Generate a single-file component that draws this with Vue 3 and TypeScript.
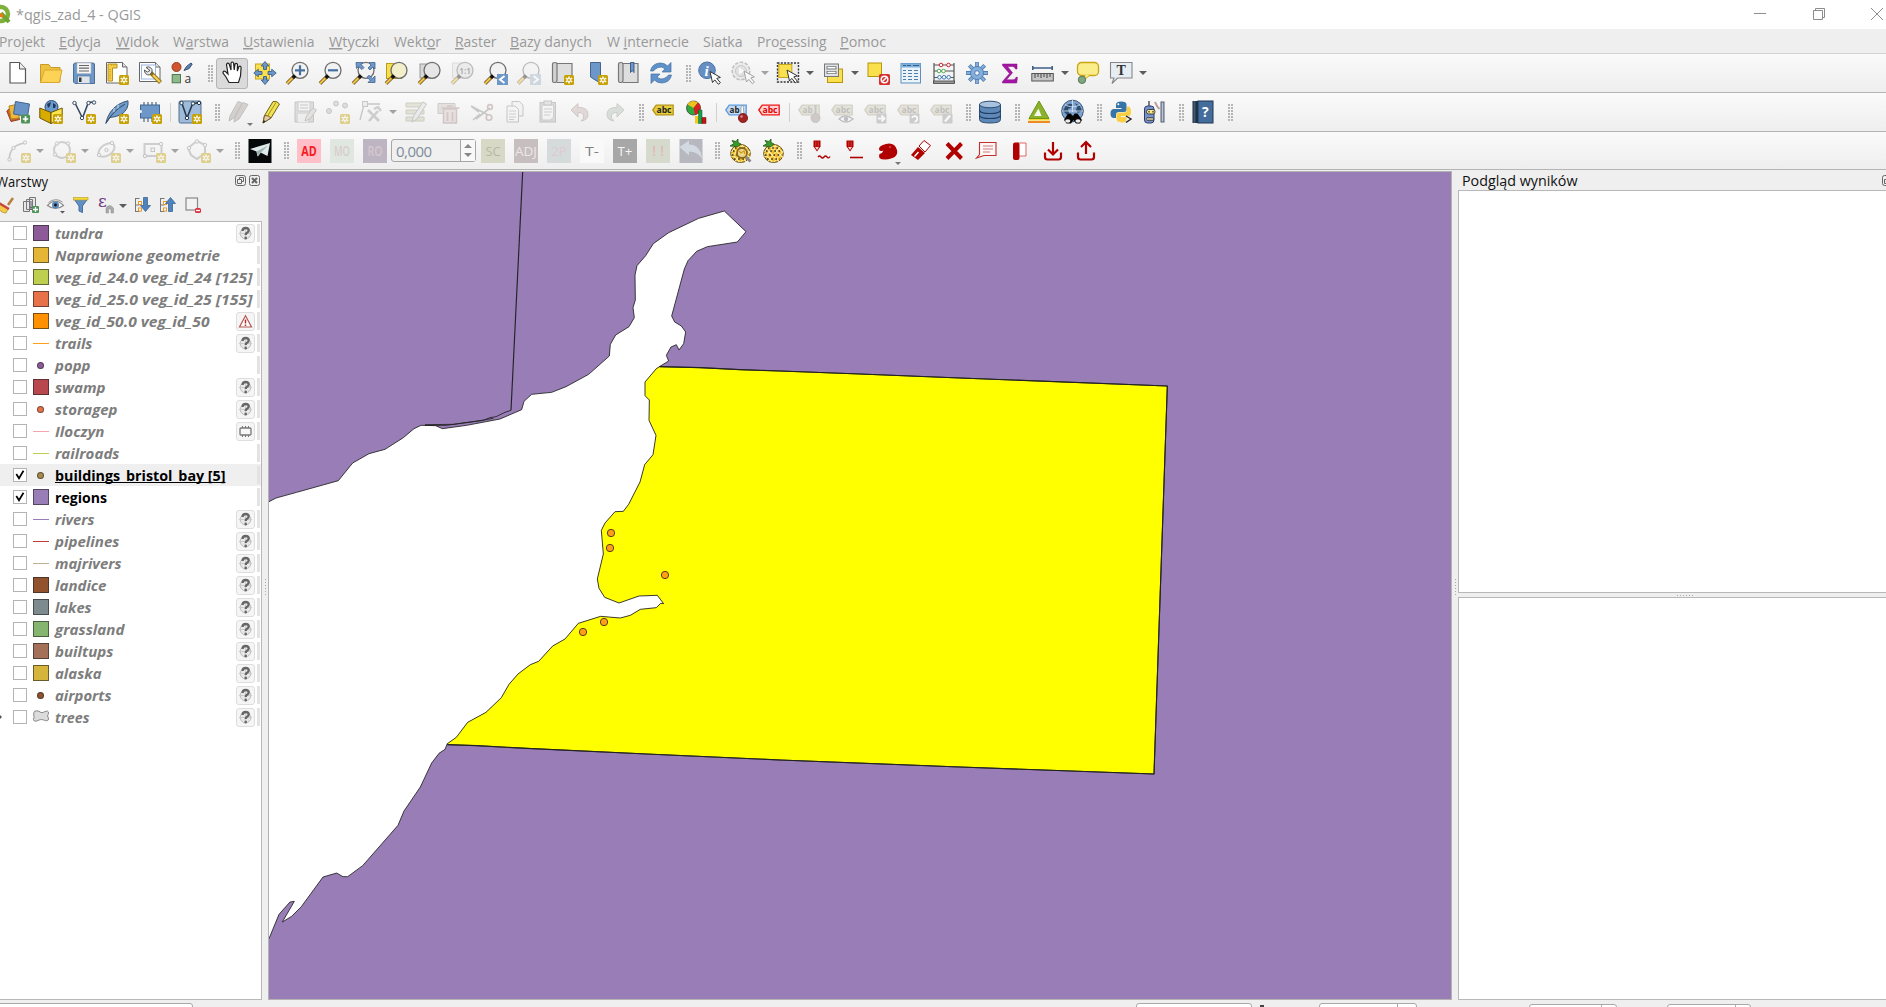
<script setup lang="ts">
type MenuEntry = { pre: string; key: string; post: string; w: number; cell: number }
type ToolItem = { kind: 'icon' | 'arrow' | 'grip' | 'sep' | 'spin'; icon?: string; off?: boolean; on?: boolean }
type Layer = {
  name: string
  w: number
  kind: 'fill' | 'line' | 'dot' | 'group'
  color: string
  mark?: 'crs' | 'warn' | 'mem'
  checked?: boolean
  selected?: boolean
}

// cell = distance from the start of this label to the start of the next one
const menus: MenuEntry[] = [
  { pre: '', key: '', post: 'Projekt', w: 46, cell: 60 },
  { pre: '', key: 'E', post: 'dycja', w: 42, cell: 57 },
  { pre: '', key: 'W', post: 'idok', w: 43, cell: 56.5 },
  { pre: 'W', key: 'a', post: 'rstwa', w: 56, cell: 70.5 },
  { pre: '', key: 'U', post: 'stawienia', w: 71.5, cell: 86 },
  { pre: '', key: 'W', post: 'tyczki', w: 50.5, cell: 65 },
  { pre: 'Wekt', key: 'o', post: 'r', w: 47, cell: 60.5 },
  { pre: '', key: 'R', post: 'aster', w: 41.5, cell: 55.5 },
  { pre: '', key: 'B', post: 'azy danych', w: 82, cell: 96.5 },
  { pre: 'W ', key: 'i', post: 'nternecie', w: 82, cell: 96.5 },
  { pre: 'Siatka', key: '', post: '', w: 39.5, cell: 54 },
  { pre: 'Pro', key: 'c', post: 'essing', w: 69.5, cell: 83 },
  { pre: '', key: 'P', post: 'omoc', w: 46, cell: 60 },
]

const layers: Layer[] = [
  { name: 'tundra', w: 48, kind: 'fill', color: '#8d5a99', mark: 'crs' },
  { name: 'Naprawione geometrie', w: 165, kind: 'fill', color: '#e5b636' },
  { name: 'veg_id_24.0 veg_id_24 [125]', w: 197.5, kind: 'fill', color: '#becf50' },
  { name: 'veg_id_25.0 veg_id_25 [155]', w: 197.5, kind: 'fill', color: '#e77148' },
  { name: 'veg_id_50.0 veg_id_50', w: 154.5, kind: 'fill', color: '#ff9000', mark: 'warn' },
  { name: 'trails', w: 37.5, kind: 'line', color: '#ff9e17', mark: 'crs' },
  { name: 'popp', w: 35.5, kind: 'dot', color: '#8d5a99' },
  { name: 'swamp', w: 50.5, kind: 'fill', color: '#b9484e', mark: 'crs' },
  { name: 'storagep', w: 62.5, kind: 'dot', color: '#e77148', mark: 'crs' },
  { name: 'Iloczyn', w: 49.5, kind: 'line', color: '#f3a6b2', mark: 'mem' },
  { name: 'railroads', w: 64.5, kind: 'line', color: '#becf50' },
  { name: 'buildings_bristol_bay [5]', w: 170.5, kind: 'dot', color: '#a5884c', checked: true, selected: true },
  { name: 'regions', w: 52, kind: 'fill', color: '#987db7', checked: true },
  { name: 'rivers', w: 39.5, kind: 'line', color: '#987db7', mark: 'crs' },
  { name: 'pipelines', w: 64.5, kind: 'line', color: '#c43c39', mark: 'crs' },
  { name: 'majrivers', w: 66.5, kind: 'line', color: '#beb297', mark: 'crs' },
  { name: 'landice', w: 51.5, kind: 'fill', color: '#91522d', mark: 'crs' },
  { name: 'lakes', w: 36.5, kind: 'fill', color: '#7d8b8f', mark: 'crs' },
  { name: 'grassland', w: 69.5, kind: 'fill', color: '#85b66f', mark: 'crs' },
  { name: 'builtups', w: 58.5, kind: 'fill', color: '#a47158', mark: 'crs' },
  { name: 'alaska', w: 46.5, kind: 'fill', color: '#d5b43c', mark: 'crs' },
  { name: 'airports', w: 56.5, kind: 'dot', color: '#91522d', mark: 'crs' },
  { name: 'trees', w: 34.5, kind: 'group', color: '#d8d8d8', mark: 'crs' },
]

const star =
  '<rect x="14" y="14" width="10" height="10" rx="1.500" fill="#c6a206"/><path d="M19 15.400v7.200M15.800 17.200l6.400 3.600M22.200 17.200l-6.400 3.600" stroke="#fff" stroke-width="1.500"/><circle cx="19" cy="19" r="1" fill="#c6a206"/>'
const cursor = (x: number, y: number) =>
  `<path transform="translate(${x} ${y})" d="M0 0l2.500 11 2.300-2.600 3.600 4.400 2-1.600-3.600-4.300 3.600-1z" fill="#fff" stroke="#333" stroke-width="1"/>`
const lens = (inner: string, fill = '#f2f2f2') =>
  `<path d="M8 15.500L1 22.500" stroke="#4a3a10" stroke-width="3.600"/><path d="M6.400 17.100L1 22.500" stroke="#f5c344" stroke-width="2.200"/><circle cx="14" cy="9.300" r="8" fill="${fill}" stroke="#6e6e6e" stroke-width="1.300"/><path d="M7.200 16.400l2-2" stroke="#111" stroke-width="3.600"/>${inner}`
const tag = (fill: string, stroke: string, ink: string, extra = '', txt = 'abc') =>
  `<path d="M1.800 10L5.200 5.200h17v9.600h-17z" fill="${fill}" stroke="${stroke}" stroke-width="1.300"/><text x="5.500" y="13.200" font-size="9.500" font-weight="700" textLength="${txt.length > 2 ? 15 : 10}" lengthAdjust="spacingAndGlyphs" fill="${ink}">${txt}</text>${extra}`
const offTag = (extra: string, txt = 'abc') => tag('#cfcbb0', '#a5a28c', '#777', extra, txt)
const square = (bg: string, ink: string, txt: string, w: number, weight = 400) =>
  `<rect width="24" height="24" fill="${bg}"/><text x="${12 - w / 2}" y="17" font-size="13.500" font-weight="${weight}" textLength="${w}" lengthAdjust="spacingAndGlyphs" fill="${ink}">${txt}</text>`
const globe =
  '<circle cx="12.500" cy="11" r="10.800" fill="#7fa3cf" stroke="#3d5878"/><path d="M5 7c3-4 6-4 8-2l-2 3-3 1 1 4-2 2-4-4zM15 3l5 3 2 5-4 2-2-3 1-3z" fill="#2f4d70"/><path d="M5 4.500c4 3 11 3 15 0M2 11h21M12.500 0v12" stroke="#dce8f5" fill="none" stroke-width=".8"/>'
const pineapple =
  '<ellipse cx="12.500" cy="14.500" rx="9.800" ry="9" fill="#f0b92c" stroke="#5f4a14"/><path d="M5 9.500l13 13M9 6.500l13 12M3.500 14.500l8 8.500M14 6.500l8 7M19 8L7 22M14.500 6.500L3.500 18M22 12.500l-9 10.500M9.500 6.500L3.500 13" stroke="#fff09a" stroke-width="1.100"/><path d="M5 12h15M4 16h17M6 20h13M7 9h11" stroke="#33301c" stroke-width="1.500" stroke-dasharray="1.600 2.600"/><path d="M10 7.500L2 7l4-2.500L4 1.500l4 1L10 0v3.500L13 5z" fill="#3c9a2c" stroke="#1d5b12" stroke-width=".8"/>'
const redPen =
  '<path d="M3.500 1.500h7v6L7 12.500l-3.500-5z" fill="#b00000"/><path d="M5 8h4L7 11z" fill="#f5d0d0"/><path d="M5.800 2.500v5M8.200 2.500v5" stroke="#e06060" stroke-width=".7"/>'
const book =
  '<path d="M5 2.500h17v19H7" fill="#dedede" stroke="#777" stroke-width="1.200"/><path d="M2.500 3.500q0-2 2.300-2 2.200 0 2.200 2V19q0 2.500-2 2.500H4Q2.500 21.500 2.500 19.500z" fill="#d0d0d0" stroke="#777" stroke-width="1.200"/>'

const icons: Record<string, string> = {
  blank: '<path d="M4 1.500h9.500L19.500 8v14H4z" fill="#fff" stroke="#555" stroke-width="1.200"/><path d="M13.500 1.500V8h6" fill="#eee" stroke="#555"/>',
  open: '<path d="M1.500 21.500v-18h8.300l2 3H21V21z" fill="#eec13e" stroke="#c69b2c"/><path d="M5.500 9H23l-2.800 12.500H1.500z" fill="#fcd354" stroke="#d7a932"/>',
  save: '<path d="M3 2h18.500L22.500 3v19.500H3L1.500 21V3z" fill="#6c97c8" stroke="#4c6e96"/><rect x="5" y="2" width="14" height="10.500" fill="#f5f5f5" stroke="#bbb" stroke-width=".6"/><path d="M7 4.500h10M7 7.200h10M7 10h10" stroke="#666" stroke-width="1.200"/><rect x="5.500" y="15" width="12.500" height="7.500" fill="#dfe4ea" stroke="#4c6e96" stroke-width=".6"/><rect x="7" y="16.500" width="2.500" height="4.500" fill="#333"/>',
  layout: '<path d="M1.500 1.500h16L22 6v16H1.500z" fill="#fff" stroke="#666"/><path d="M17.500 1.500V6H22" fill="#ddd" stroke="#666"/><path d="M3 3h9v4H7.500v13H3z" fill="#f7cf4a" stroke="#b8901c"/><path d="M5 8v11M6 4h5" stroke="#b8901c" stroke-width="1.200" stroke-dasharray="1 1.200"/>' + star,
  manager: '<path d="M1.500 1.500h16L22 6v14.500H1.500z" fill="#fff" stroke="#666"/><path d="M17.500 1.500V6H22" fill="#ddd" stroke="#666"/><rect x="3.500" y="4" width="14" height="14" fill="none" stroke="#9cb4e0"/><path d="M13 12l9.500 9.500" stroke="#8a6f1b" stroke-width="4"/><path d="M15 14l7 7" stroke="#f5cf52" stroke-width="2.400"/><path d="M8 6.500a4 4 0 0 1 6 4.500l-2.500 3A4.500 4.500 0 0 1 6.500 9l2.800 2L12 9.500z" fill="#e8e8e8" stroke="#555" stroke-width="1"/>',
  style: '<circle cx="5.500" cy="6" r="4.500" fill="#d0562f" stroke="#9a3a1c"/><path d="M13 9.500l2.500-4L20 2l1.200 1-3 4.500z" fill="#5d84b4" stroke="#34506f"/><rect x="1.200" y="13.500" width="8.300" height="8.300" fill="#8fb88c" stroke="#4e7a4c"/><text x="13.500" y="21.500" font-size="12" fill="#333">a</text>',
  hand: '<path transform="translate(2.500 0)" d="M7.500 21.500L4.500 16 1.500 12q0-2.500 2.500-1.500l2.500 2.500L5 3.500q1-2.500 2.700-.5L9.500 9V2q1.200-2 2.600 0l.6 7 .8-6q1.500-1.500 2.500.3L15.800 10l1.600-4.500q2-1 2.200 1L19 15l-2 6.500z" fill="#fff" stroke="#222" stroke-width="1.200"/>',
  pan: '<rect x="2.500" y="3" width="14" height="15" fill="#fbe04e" stroke="#c7a51c"/><path d="M12 .5l3.800 4.500h-2.300v3.500h-3V5H8.200zM12 23.500L8.200 19h2.300v-3.500h3V19h2.300zM.8 12L5.300 8.200v2.300H9v3H5.300v2.300zM23.200 12l-4.500-3.800v2.300H15v3h3.700v2.300z" fill="#6c97c8" stroke="#3d5f87" stroke-width=".9"/>',
  zoomin: lens('<path d="M14 4.300v10M9 9.300h10" stroke="#46719f" stroke-width="2.200"/>'),
  zoomout: lens('<path d="M9 9.300h10" stroke="#46719f" stroke-width="2.200"/>'),
  zoomfull: lens('<path d="M4 1.500h7L9 3.500l3 3-2 2-3.500-3-2 2zM23 1.500v6.500l-2-2-3 3-2-2 3-3-2-2.500zM23 21.500h-7l2.200-2.300-3.200-3 2-2 3.300 3.300L23 15z" fill="#6c97c8" stroke="#42638b" stroke-width=".8"/>'),
  zoomsel: '<rect x="1.500" y="2.500" width="15" height="15" fill="#f6dd4c" stroke="#bb9d1c"/>' + lens('', '#f2efcb'),
  zoomlayer: '<rect x="2" y="3" width="14" height="14" fill="#d8d8d8" stroke="#999"/>' + lens('', '#e6e6e6'),
  zoomnative: '<rect x="1.500" y="2" width="15" height="15" fill="#e4e4e4" stroke="#bbb"/>' + lens('<text x="8.300" y="13" font-size="9.500" font-weight="700" textLength="11.500" lengthAdjust="spacingAndGlyphs" fill="#555">1:1</text>', '#ddd'),
  zoomlast: lens('<rect x="13" y="13" width="11" height="11" fill="#6c97c8"/><path d="M20.500 15L16 18.500l4.500 3.500" fill="none" stroke="#fff" stroke-width="2"/>'),
  zoomnext: lens('<rect x="13" y="13" width="11" height="11" fill="#9fb2c8"/><path d="M16.500 15l4.500 3.500-4.500 3.500" fill="none" stroke="#fff" stroke-width="2"/>'),
  newmap: book + star,
  bookmark: '<path d="M7.500 1.500h10V22l-4.500-2.500-5.500-3.500z" fill="#6c97c8" stroke="#44658e"/><g transform="translate(1 0)">' + star + '</g>',
  bookmarks: book + '<path d="M14.500 1.500h3.500v10l-1.800-2-1.700 2z" fill="#6c97c8" stroke="#34557e" stroke-width=".9"/>',
  refresh: '<path d="M1.500 10Q3 2.500 11 2q5 0 7.500 3L22 1.500V11h-9l3-3.200Q13 5 9 6.500 5.500 8 4.500 10z" fill="#5f92cb" stroke="#44709f" stroke-width=".7"/><path d="M22.500 14Q21 21.500 13 22q-5 0-7.500-3L2 22.500V13h9l-3 3.200q3 2.800 7 1.300 3.500-1.500 4.500-3.500z" fill="#5f92cb" stroke="#44709f" stroke-width=".7"/>',
  identify: '<circle cx="9" cy="9.300" r="8.300" fill="#6690c3" stroke="#4b73a4"/><text x="6.500" y="14.500" font-size="15" font-weight="700" font-style="italic" font-family="Liberation Serif" fill="#fff">i</text>' + cursor(12, 10.5),
  action: '<circle cx="10" cy="10" r="8.800" fill="#ddd" stroke="#777" stroke-width="1.500" stroke-dasharray="3.500 1.500"/><circle cx="10" cy="10" r="5.500" fill="#c8c8c8" stroke="#888"/><path d="M8 6.500l5.500 3.500L8 13.500z" fill="#fff"/>' + cursor(13, 10),
  select: '<rect x="1.500" y="2" width="21" height="19" fill="#eee" stroke="#333" stroke-width="1.400" stroke-dasharray="2 1.300"/><rect x="2.800" y="3.500" width="13" height="13" fill="#fbe04e" stroke="#c7a51c"/>' + cursor(11, 9),
  form: '<rect x="6.500" y="8" width="15" height="13.500" fill="#fbe04e" stroke="#b8960c"/><rect x="3.500" y="3" width="14" height="12.500" fill="#dfe3e6" stroke="#777"/><path d="M5.500 6.800h10M5.500 11.500h10" stroke="#777" stroke-width="3.200"/><path d="M6.500 6.800h8M6.500 11.500h8" stroke="#fff" stroke-width="1.600"/>',
  deselect: '<rect x="2" y="2" width="13.500" height="13.500" fill="#fbe04e" stroke="#b8960c"/><rect x="13" y="13" width="11" height="11" rx="1.500" fill="#d73030"/><circle cx="18.500" cy="18.500" r="3.300" fill="none" stroke="#fff" stroke-width="1.500"/><path d="M16.500 20.500l4-4" stroke="#fff" stroke-width="1.500"/>',
  table: '<rect x="2" y="2.500" width="19.500" height="19.500" fill="#eaf3fa" stroke="#5b8fc0"/><rect x="2" y="2.500" width="19.500" height="4" fill="#7fb0dc"/><path d="M4 4.500h3M8 4.500h4M14 4.500h6" stroke="#2f6290" stroke-width="1"/><path d="M4 9.500h3M9 9.500h4M15 9.500h4M4 12.500h3M9 12.500h4M15 12.500h4M4 15.500h3M9 15.500h4M15 15.500h4M4 18.500h3M9 18.500h4M15 18.500h4" stroke="#4d7da8" stroke-width="1.200"/>',
  abacus: '<path d="M2 2v20M22 2v20M2 4h20M2 10h20M2 16.500h20" stroke="#555" stroke-width="1.200"/><rect x="1.500" y="20" width="21" height="2.500" fill="#999" stroke="#444" stroke-width=".8"/><g fill="#fff"><circle cx="9" cy="4" r="1.800" stroke="#d02030"/><circle cx="16.500" cy="4" r="1.800" stroke="#d02030"/><circle cx="7" cy="10" r="1.800" stroke="#4fae4f"/><circle cx="11.500" cy="10" r="1.800" stroke="#4fae4f"/><circle cx="7.500" cy="16.300" r="1.800" stroke="#3d7ab8"/><circle cx="12" cy="16.300" r="1.800" stroke="#3d7ab8"/><circle cx="16.700" cy="16.300" r="1.800" stroke="#3d7ab8"/></g>',
  gear: '<path d="M12 1v22M1 12h22M4.300 4.300l15.400 15.400M19.700 4.300L4.300 19.700" stroke="#4f7fb5" stroke-width="3.800"/><path d="M12 1.500v21M1.500 12h21M4.800 4.800l14.400 14.400M19.200 4.800L4.800 19.200" stroke="#86aedb" stroke-width="2.200"/><circle cx="12" cy="12" r="6.500" fill="#86aedb" stroke="#4f7fb5"/><circle cx="12" cy="12" r="2.300" fill="#f4f4f4" stroke="#4f7fb5"/>',
  sigma: '<path d="M4.500 3H19v5h-1.500q-.5-2.500-3-2.500H9.500l5 6.300-6 7h6.500q2.500 0 3-2.500H19.500l-.8 5.700H4.500v-1.500l7-8-7-8z" fill="#a516a5" stroke="#7d0e7d" stroke-width=".5"/>',
  ruler: '<path d="M1.500 7h20M1.800 5v4M21.200 5v4" stroke="#3f5f85" stroke-width="1.600"/><rect x=".8" y="12.500" width="21.500" height="7.500" fill="#c5c5c5" stroke="#555"/><path d="M4 13v4M7 13v3M10 13v4M13 13v3M16 13v4M19 13v3" stroke="#444"/>',
  tip: '<rect x="1.500" y="1.500" width="21" height="13" rx="4" fill="#fbed8a" stroke="#c9a717" stroke-width="1.300"/><path d="M9 14l-1 5 6-5" fill="#fbed8a" stroke="#c9a717"/><circle cx="6" cy="18.800" r="3.700" fill="#81a580" stroke="#577a56"/>',
  textnote: '<path d="M1.500 1.500H23V17H8.500L3 22.500 5 17H1.500z" fill="#e6eef3" stroke="#888" stroke-width="1.100"/><text x="7.500" y="14" font-size="14" font-weight="700" font-family="Liberation Serif" fill="#333">T</text>',

  datasource: '<path d="M3.500 8.500l6-2 4 13-8.500 2L.8 11z" fill="#cf5b2e" stroke="#93401f"/><path d="M3 6l10-2v14l-8 1z" fill="#efb93c" stroke="#b3861d"/><path d="M9.500 1.500l14 2.500-2 12.500-14-2.500z" fill="#6993c6" stroke="#42648e"/><rect x="15" y="14.500" width="9" height="9" rx="1.500" fill="#4f9257"/><path d="M19.500 16.300v5.400M16.800 19h5.400" stroke="#fff" stroke-width="1.700"/>',
  geopackage: '<circle cx="12.500" cy="7" r="6.500" fill="#6d98cb" stroke="#2b4f78"/><path d="M8 4l4-2-1 4-2 2zM14 3l3 2-1 3-2 0z" fill="#1d395c"/><path d="M.8 8L12 12.500v11L.8 18z" fill="#d8ab00" stroke="#6b5400"/><path d="M12 12.500L23.200 8v10L12 23.500z" fill="#fbe44e" stroke="#6b5400"/>' + star,
  shapefile: '<path d="M3 3l7.500 15L16 3.500q2-2 5-1" fill="none" stroke="#364c63" stroke-width="1.600"/><g fill="#fff" stroke="#364c63"><circle cx="2.500" cy="3" r="1.700"/><circle cx="10" cy="18" r="1.700"/><circle cx="16.500" cy="3" r="1.700"/><circle cx="22" cy="2.500" r="1.700"/></g>' + star,
  spatialite: '<path d="M.8 23.500Q2 17 5.500 12 12 3 23 .8 24 9 17 14q-5 3-12 3.500z" fill="#6f9ac9" stroke="#3c5876"/><path d="M1 23Q8 11 20 4" stroke="#2f4a66" fill="none"/><path d="M9 12l0-4M13 8.500V4.500" stroke="#e6eff8" stroke-width=".8"/>' + star,
  memory: '<path d="M6 2v20M10 2v20M14 2v20M18 2v20" stroke="#6d7d8d" stroke-width="1.400"/><rect x="2.500" y="5" width="19" height="13" fill="#6c97c8" stroke="#41668f"/><circle cx="2.500" cy="11.500" r="1.500" fill="#f4f4f4"/>' + star,
  virtual: '<rect x="1" y="1" width="22" height="22" rx="1.500" fill="#9fbbd9" stroke="#53708f"/><path d="M4 3.500l5 14.500 5.500-14L21 2.500" fill="none" stroke="#22384e" stroke-width="1.500"/><g fill="#fff" stroke="#22384e"><circle cx="3.500" cy="3" r="1.700"/><circle cx="9" cy="18" r="1.700"/><circle cx="15" cy="3.500" r="1.700"/><circle cx="21" cy="3" r="1.700"/></g>' + star,
  pencils: '<g fill="#a5a19c" stroke="#7f7b77"><path d="M2 21l1-5L11 1.500l4 1.500L7 18z"/><path d="M7 22l1-5L16 2.500l5 2L12 19z"/></g>',
  pencil: '<path d="M3 23l1.500-7.500L13 1.500q4-1 6.500 2.500L11 18z" fill="#f0e054" stroke="#6d6212"/><path d="M3 23l1.500-7.500q4-.5 6.500 2.500z" fill="#e8c9a0" stroke="#6d5a3a"/><path d="M3 23l.6-3 2 1.200z" fill="#222"/><path d="M7.500 16L16 2.500" stroke="#a3921f"/>',
  saveedit: '<path d="M2 2h18.500v20H2z" fill="#bbb" stroke="#888"/><rect x="5" y="2" width="12" height="9" fill="#eee" stroke="#999"/><path d="M7 5h8M7 8h8" stroke="#888"/><rect x="5" y="14" width="10" height="8" fill="#e8e8e8"/><path d="M12 21l1.500-5L20 8l3.500 2L17 19z" fill="#d0c8c4" stroke="#888"/>',
  addpoint: '<g fill="#bbb" stroke="#888"><circle cx="3" cy="11" r="2.500"/><circle cx="10" cy="3.500" r="2.500"/><circle cx="19" cy="5.500" r="2.500"/></g>' + star,
  vertex: '<path d="M5 5Q3 12 1 20M6 4h15" stroke="#888" stroke-width="1.300" fill="none"/><rect x="3.500" y="1.500" width="5" height="5" fill="#ddd" stroke="#888"/><path d="M10 21l9-10M9 10l11 11" stroke="#999" stroke-width="2.600"/><path d="M15 9l4-2 3 4" stroke="#999" stroke-width="2.500" fill="none"/>',
  multiedit: '<g fill="#c9c9ad" stroke="#9a9a84"><path d="M2 3h18v4H2zM2 10h18v4H2zM2 17h18v4H2z"/></g><path d="M8 22l1.500-6L19 2l3.500 2L13 19z" fill="#ddd" stroke="#888"/>',
  del: '<path d="M1 3.500h17v10H1z" fill="#cfc3c3" stroke="#9f9090"/><path d="M6.500 9h13v14h-13z" fill="#d9c4c4" stroke="#a58a8a" stroke-width="1.500"/><path d="M4.500 8h18M10 6h6M10.500 12v9M15.500 12v9" stroke="#a58a8a" stroke-width="1.700"/>',
  cut: '<path d="M1 6l17 9M6 19L20 8M1 6l8 6M3 20l7-6" stroke="#8d8d8d" stroke-width="1.600"/><circle cx="20" cy="7" r="2.400" fill="none" stroke="#a08888" stroke-width="1.600"/><circle cx="19" cy="17.500" r="2.800" fill="none" stroke="#a08888" stroke-width="1.600"/>',
  copy: '<path d="M9 1.500h7.500L20 5v11H9z" fill="#eee" stroke="#888"/><path d="M4 6h8l3.500 3.500V22H4z" fill="#f4f4f4" stroke="#888"/><path d="M6 11h7M6 14h7M6 17h7M6 19.500h5" stroke="#999"/>',
  paste: '<rect x="4" y="2.500" width="15.500" height="19.500" fill="#bbb7ac" stroke="#888"/><path d="M6 5h11.500v12l-3 3H6z" fill="#f4f4f4" stroke="#999"/><rect x="8" y="1" width="7.500" height="4" fill="#ccc" stroke="#888"/><path d="M8 9h8M8 12h8M8 15h6" stroke="#999"/>',
  undo: '<path d="M2 10l7-6.500v4Q19 7 19 14.500q0 5.500-7 6.500 4-3 2.500-6Q13 12 9 12.500v4.500z" fill="#c5b3b0" stroke="#9d8d8a"/>',
  redo: '<path d="M22 10l-7-6.500v4Q5 7 5 14.500 5 20 12 21q-4-3-2.500-6Q11 12 15 12.500v4.500z" fill="#b6c0b8" stroke="#909a92"/>',
  abc: tag('#e9cf3e', '#b39413', '#222'),
  diagram: '<circle cx="9.500" cy="8" r="7" fill="#2fa83c" stroke="#333" stroke-width=".7"/><path d="M9.500 8L3.500 4.500a7 7 0 0 1 6-3.500l4.500 1.600z" fill="#efc11c"/><path d="M9.500 8L14 2.600a7 7 0 0 1-3 12.200z" fill="#d42020"/><path d="M11 16h3.500v7.500H11z" fill="#f5c818"/><path d="M14.500 10H18v13.500h-3.500z" fill="#16a04a" stroke="#0b5a26" stroke-width=".5"/><path d="M18 17.500h4v6h-4z" fill="#c61414" stroke="#611" stroke-width=".5"/>',
  abpin: tag('#c5dcf4', '#5b9be0', '#222', '<path d="M17 14V6.500l2-1.500 1 9" fill="#fff" stroke="#777" stroke-width=".6"/><circle cx="19" cy="18" r="4.600" fill="#a32222" stroke="#6f1515" stroke-width=".8"/><circle cx="17.500" cy="16.500" r="1.200" fill="#e09090"/>', 'ab'),
  abcred: tag('#ffd5d5', '#f21414', '#e00000'),
  tagpin: offTag('<circle cx="18.500" cy="18" r="4.500" fill="#a09090" stroke="#888"/><path d="M18.500 5v9" stroke="#888" stroke-width="2"/>', 'ab'),
  tageye: offTag('<path d="M9 19q6-6 14 0-7 6-14 0z" fill="#fff" stroke="#777" stroke-width="1.300"/><circle cx="16" cy="19" r="2.300" fill="#778"/>'),
  tagmove: offTag('<rect x="13.500" y="13.500" width="10" height="10" rx="1" fill="#999"/><path d="M15 18.500h6M18.500 15.500l3 3-3 3" stroke="#fff" stroke-width="1.800" fill="none"/>'),
  tagrot: offTag('<rect x="13.500" y="13.500" width="10" height="10" rx="1" fill="#999"/><path d="M16 18a2.700 2.700 0 1 1 2.500 3.500" stroke="#fff" stroke-width="1.800" fill="none"/>'),
  tagedit: offTag('<rect x="13.500" y="13.500" width="10" height="10" rx="1" fill="#999"/><path d="M16 21.500l5-6" stroke="#fff" stroke-width="2.400"/>'),
  database: '<path d="M1.500 4.500v15q0 3.500 10.500 3.500t10.500-3.500v-15z" fill="#5e88b8" stroke="#2e4d70"/><ellipse cx="12" cy="4.500" rx="10.500" ry="3.300" fill="#a8c3e0" stroke="#2e4d70"/><path d="M1.500 10.500q1 3 10.500 3t10.500-3M1.500 15.500q1 3 10.500 3t10.500-3" fill="none" stroke="#1f3d60" stroke-width="1.200"/>',
  grass: '<path d="M12 1L22 18.500H2z" fill="#8ab22d" stroke="#6d9412"/><path d="M11.500 8.500l3 7.500H7z" fill="#f6f8ee"/><path d="M1.500 19.800h21" stroke="#f5d60b" stroke-width="1.300"/><path d="M1 22h22" stroke="#f08a24" stroke-width="2"/>',
  metasearch: globe + '<path d="M8 13.500h3l1 2h1.500l1-2h3L22 20l-2 3.500h-4L13.500 20 11 23.500H6.500L4 20z" fill="#050505"/><ellipse cx="7.800" cy="21" rx="2.600" ry="1.800" fill="#eee"/><ellipse cx="18" cy="21" rx="2.600" ry="1.800" fill="#eee"/>',
  python: '<path d="M12 1.500q-5 0-5 3V8h5.500v1H5q-3.500 0-3.500 4.500T5 18h2v-3q0-3 3-3h5q2.500 0 2.500-2.500v-5q0-3-5.500-3z" fill="#3874a5"/><circle cx="9.300" cy="4.300" r="1" fill="#fff"/><path d="M18 6.500v3q0 3-3 3h-5Q7.500 12.500 7.500 15v4q0 3 5 3.500t5-3v-2.500H12v-1h7.500q2.500 0 2.500-4t-2-5.500z" fill="#f9cf43"/><path d="M17 16l5 3-5 3.500" fill="none" stroke="#222" stroke-width="1.400"/>',
  bender: '<path d="M7 1v5" stroke="#556" stroke-width="1.500"/><rect x="2.500" y="6" width="9.500" height="17" rx="3" fill="#7793cf" stroke="#2c3c66"/><rect x="4.500" y="9.500" width="8.500" height="4.500" rx="2" fill="#f5e992" stroke="#222" stroke-width=".8"/><path d="M6.500 11.700h1M10.500 11.700h1" stroke="#000" stroke-width="1.500"/><path d="M5 17.500h6v3H5zM7 17.500v3M9 17.500v3" fill="#f5f0c0" stroke="#222" stroke-width=".6"/><path d="M13 2q2 5 4.500 7" stroke="#b99" stroke-width="2"/><path d="M20.500 1.500v21" stroke="#555f70" stroke-width="4"/><path d="M20.500 2.500v19" stroke="#b9c4dc" stroke-width="1.800"/>',
  help: '<rect x="1.500" y="1" width="20.500" height="22" fill="#1e3045"/><rect x="7" y="1" width="15" height="22" fill="#446c9c" stroke="#22364e"/><path d="M2.500 1h2v22h-2z" fill="#41596f"/><text x="11" y="17" font-size="14" font-weight="700" fill="#fff">?</text>',

  curve: '<path d="M2 21Q3 5 19 4" fill="none" stroke="#888" stroke-width="1.500"/><g fill="#eee" stroke="#888"><circle cx="2.500" cy="20.500" r="1.700"/><circle cx="6.500" cy="9" r="1.700"/><circle cx="18" cy="3.500" r="1.700"/></g>' + star,
  circle: '<circle cx="10" cy="11" r="8" fill="none" stroke="#999" stroke-width="2"/><g fill="#eee" stroke="#888"><circle cx="5" cy="4.500" r="1.700"/><circle cx="16" cy="4.500" r="1.700"/><circle cx="3" cy="15.500" r="1.700"/></g>' + star,
  ellipse: '<ellipse cx="9.500" cy="11" rx="9" ry="5.500" transform="rotate(-35 9.500 11)" fill="none" stroke="#999" stroke-width="2"/><g fill="#eee" stroke="#888"><circle cx="9.500" cy="11" r="1.700"/><circle cx="15" cy="4" r="1.700"/><circle cx="2" cy="16" r="1.700"/></g>' + star,
  rect: '<rect x="2.500" y="5" width="17" height="12" fill="none" stroke="#999" stroke-width="2"/><g fill="#eee" stroke="#888"><circle cx="19" cy="5" r="1.700"/><circle cx="3" cy="17" r="1.700"/><rect x="9" y="9" width="3.500" height="3.500"/></g>' + star,
  polygon: '<path d="M10 2l8 4 0 8-8 6-6-4-3-7z" fill="none" stroke="#999" stroke-width="2"/><g fill="#eee" stroke="#888"><circle cx="10" cy="2.500" r="1.700"/><circle cx="18" cy="6" r="1.700"/><circle cx="2" cy="9" r="1.700"/></g>' + star,
  plane: '<rect x=".5" y="0" width="23" height="24" fill="#040808"/><path d="M2 10L22 4l-2.500 13-7-3.500-3 4-1-5z" fill="#dfeaea"/><path d="M8.500 12.500L20 6.500l-7 7-3 4z" fill="#9eb4b4"/>',
  ad: square('#ffbfc9', '#f51b22', 'AD', 15.5, 700),
  mo: square('#e0e7e0', '#d9cccc', 'MO', 16, 600),
  ro: square('#bdb6c2', '#d6c6cf', 'RO', 15, 600),
  sc: square('#d7d9c6', '#b3b8a4', 'SC', 15),
  adj: square('#c7bec0', '#ece8e9', 'ADJ', 22),
  twop: square('#d5dbda', '#dfcacd', '2P', 15),
  tminus: square('#f9f9f9', '#808080', 'T-', 14),
  tplus: square('#a7a7a7', '#f5f5f5', 'T+', 15),
  bang: square('#d6dacd', '#dfbcbc', '! !', 12, 600),
  back: '<rect x=".5" width="23" height="24" fill="#b7b7bf"/><path d="M.5 8L10 1.500v4Q22 6 23 20q-4-7.500-13-7.500v4z" fill="#d3d9e1"/>',
  pine1: pineapple + '<circle cx="14" cy="14" r="5" fill="#ecd98a" stroke="#8a6a20" stroke-width="1.800"/><path d="M18 18l4.500 4.500" stroke="#888" stroke-width="2.600"/><path d="M11 12l2 2 3-2 1 3" stroke="#d79a1a" stroke-width="1.300" fill="none"/>',
  pine2: pineapple,
  redwave: redPen + '<path d="M8 18q1.500-2 3 0t3 0 3 0 3-.5" fill="none" stroke="#b00000" stroke-width="1.300"/>',
  redline: redPen + '<path d="M7 18.500h13" stroke="#b00000" stroke-width="1.600"/>',
  palette: '<path d="M3.500 15Q1 20.500 9 20.500q14-1 12-9.500Q18.500 3 10 5q-7.500 1.500-7 5.500 1 2.500 4.500 1-1 3-4 3.500z" fill="#b00000"/><circle cx="14" cy="8" r="1" fill="#d55"/>',
  eraser: '<path d="M2 16l7-8 7 6-7 7z" fill="#b00000"/><path d="M10 7l5-5.500 6.500 5L16 13z" fill="#fff" stroke="#b00000"/><path d="M5.500 17.500l4-4.500" stroke="#fff" stroke-width="1.500"/>',
  cross: '<path d="M5 4.500l14.500 15M19.500 4.500L5 19.500" stroke="#b00000" stroke-width="4"/>',
  note: '<path d="M4.500 3.500H21v13H9L1.500 19l3-3.500z" fill="#fff6f6" stroke="#c23030" stroke-width="1.100"/><path d="M8 7h10M8 10h10M8 13h7" stroke="#cf7a7a"/>',
  redbook: '<path d="M9 4h9v13h-9" fill="#fff" stroke="#d66"/><rect x="5" y="3.500" width="6.500" height="17.500" rx="2" fill="#b00000"/>',
  down: '<path d="M4 13.500v4.500q0 2.500 2.500 2.500h11Q20 20.500 20 18v-4.500M12 3v12M7 10.500l5 5 5-5" fill="none" stroke="#b00000" stroke-width="2.200"/>',
  up: '<path d="M4 13.500v4.500q0 2.500 2.500 2.500h11Q20 20.500 20 18v-4.500M12 15V4M7 8l5-5 5 5" fill="none" stroke="#b00000" stroke-width="2.200"/>',

  brush: '<path d="M11 9l5-7" stroke="#b5813d" stroke-width="2.500"/><path d="M2 8l9 5-2 4Q3 17 0 10z" fill="#f4cb45" stroke="#a88420" stroke-width=".7"/><path d="M2 7l10 6" stroke="#c8483a" stroke-width="2.500"/>',
  addgroup: '<path d="M1.500 5.500h6v10h-6zM4.500 3.500h6v10h-6zM7.500 1.500h6v10h-6z" fill="#e8e8e8" stroke="#777"/><path d="M9 5v9" stroke="#556" stroke-width="1"/><rect x="10" y="10" width="7" height="7" rx="1" fill="#4f9257"/><path d="M13.500 11v5M11 13.500h5" stroke="#fff" stroke-width="1.300"/>',
  eye: '<path d="M.5 9.500Q8.500 1 16.500 9.500 8.500 15.500.5 9.500z" fill="#f8f8f8" stroke="#888" stroke-width="1.200"/><circle cx="8.500" cy="9" r="3.500" fill="#5c88bd"/><circle cx="8.500" cy="9" r="1.400" fill="#111"/><path d="M1.500 6.500Q8.500 1 15.500 6" fill="none" stroke="#999"/><path d="M13 15h5l-2.500 2.500z" fill="#555"/>',
  filter: '<path d="M2 3h13.500l-5 7v6.500L7 15v-5z" fill="#5f8fc6" stroke="#44709f"/><rect x="1.500" y="1.500" width="14.500" height="2.500" fill="#f4d93f" stroke="#b99c18" stroke-width=".6"/>',
  epsilon: '<text x="1" y="11" font-size="17" font-family="DejaVu Serif" fill="#703a80">ε</text><path d="M9 17v-5q3.500-5 7.500 0v5h-2.500v-4h-2.500v4z" fill="#aaa" stroke="#888" stroke-width=".5"/>',
  expand: '<path d="M1.500 2v14M1.500 2.500h4M1.500 9h4M1.500 15.500h4" stroke="#777" fill="none"/><rect x="4.500" y="5.500" width="3" height="3" fill="#fff" stroke="#e59a2e"/><rect x="4.500" y="12" width="3" height="3" fill="#fff" stroke="#e59a2e"/><path d="M9.500 1.500h4v8h3l-5 6-5-6h3z" fill="#4d83be" stroke="#2e5a8c" stroke-width=".7"/>',
  collapse: '<path d="M1.500 2v14M1.500 2.500h4M1.500 9h4M1.500 15.500h4" stroke="#777" fill="none"/><rect x="4.500" y="5.500" width="3" height="3" fill="#fff" stroke="#e59a2e"/><rect x="4.500" y="12" width="3" height="3" fill="#fff" stroke="#e59a2e"/><path d="M9.500 15.500h4v-8h3l-5-6-5 6h3z" fill="#4d83be" stroke="#2e5a8c" stroke-width=".7"/>',
  remove: '<rect x="2" y="2" width="11.500" height="12" fill="#f2f2f2" stroke="#888" stroke-width="1.200"/><rect x="11" y="12" width="6" height="5" rx="1.500" fill="#e0313f"/><path d="M12 14.500h4" stroke="#fff" stroke-width="1.300"/>',
}

// '|' grip, '/' separator, 'v' menu arrow, '#' spin box, trailing '-' disabled, trailing '*' pressed
function build(spec: string): ToolItem[] {
  return spec.split(' ').map((t): ToolItem => {
    if (t === '|') return { kind: 'grip' }
    if (t === '/') return { kind: 'sep' }
    if (t === 'v') return { kind: 'arrow' }
    if (t === 'v-') return { kind: 'arrow', off: true }
    if (t === '#') return { kind: 'spin' }
    return { kind: 'icon', icon: t.replace(/[-*]$/, ''), off: t.endsWith('-'), on: t.endsWith('*') }
  })
}

const toolbars = [
  build('blank open save layout manager style | hand* pan zoomin zoomout zoomfull zoomsel zoomlayer zoomnative- zoomlast zoomnext- newmap bookmark bookmarks refresh | identify action- v- select v form v deselect table abacus gear sigma ruler v tip textnote v'),
  build('datasource geopackage shapefile spatialite memory / virtual | pencils- pencil saveedit- addpoint- vertex- v- multiedit- del- cut- copy- paste- undo- redo- | abc diagram / abpin abcred / tagpin- tageye- tagmove- tagrot- tagedit- | database | grass metasearch | python bender | help |'),
  build('curve- v- circle- v- ellipse- v- rect- v- polygon- v- | plane | ad mo ro # sc adj twop tminus tplus bang back | pine1 pine2 | redwave redline palette eraser cross note redbook down up'),
]
const panelTools = build('brush addgroup eye filter epsilon v expand collapse remove')

const buildings = [[1053, 1089], [1050, 1134], [1215, 1215], [1032, 1356], [969, 1386]]

const northCoast =
  '27,995 48,984 110,967 235,932 278,879 327,851 375,838 430,803 462,776 483,766 527,767 547,776 620,766 720,747 785,719 792,694 815,673 875,667 918,650 986,613 1048,558 1051,523 1067,495 1107,470 1123,443 1119,413 1126,390 1125,315 1131,287 1157,257 1180,221 1226,188 1316,145 1393,123 1458,185 1432,216 1342,230 1310,244 1284,272 1273,297 1235,438 1244,456 1264,468 1277,486 1271,521 1257,540 1249,524 1233,531 1219,556 1226,573 1198,590'
const bayCoast =
  '1198,590 1188,597 1155,636 1155,677 1168,690 1167,751 1188,796 1179,854 1154,884 1140,936 1106,1003 1090,1024 1065,1025 1035,1059 1024,1081 1030,1152 1012,1227 1017,1255 1034,1282 1077,1299 1137,1278 1192,1276 1211,1301 1202,1300 1189,1313 1141,1318 1111,1336 1081,1344 1022,1339 955,1360 915,1407 878,1428 836,1474 811,1484 774,1512 747,1543 724,1583 678,1627 623,1657 589,1702 562,1721'
const southCoast =
  '562,1721 555,1738 537,1750 515,1779 481,1851 432,1923 414,1966 308,2087 263,2120 249,2120 230,2109 189,2121 124,2210 95,2239 67,2256 103,2194 90,2196 57,2233 27,2306'
const sea = `${northCoast} ${bayCoast} ${southCoast}`
const region = `${bayCoast} 562,1724 650,1727 800,1735 1160,1752 1560,1770 2100,1791 2682,1812 2722,648 2100,624 1800,612 1560,603 1440,599 1320,593`
</script>

<template>
  <div class="window">
    <header class="titlebar">
      <svg class="logo" width="12" height="24" viewBox="0 0 12 24">
        <circle cx="1" cy="12" r="7" fill="none" stroke="#7fb03b" stroke-width="4.500" />
        <path d="M1 11l8 9" stroke="#6fa432" stroke-width="4" />
        <path d="M0 11l3 1 0 4-3-1z" fill="#ee7913" />
      </svg>
      <svg class="caption" width="130" height="29">
        <text x="0" y="19.500" textLength="125" lengthAdjust="spacingAndGlyphs">*qgis_zad_4 - QGIS</text>
      </svg>
      <div class="winbuttons">
        <svg width="12" height="12"><path d="M0 5.500h12" /></svg>
        <svg width="12" height="12"><path d="M.5 2.500h9v9h-9zM2.500 2.500v-2h9v9h-2" /></svg>
        <svg width="12" height="12"><path d="M0 0l12 12M12 0L0 12" /></svg>
      </div>
    </header>

    <nav class="menubar">
      <svg v-for="m in menus" :key="m.post + m.pre" class="menu" :width="m.cell" height="24">
        <text x="0" y="18" :textLength="m.w" lengthAdjust="spacingAndGlyphs">{{ m.pre }}<tspan class="key">{{ m.key }}</tspan>{{ m.post }}</text>
      </svg>
    </nav>

    <div v-for="(bar, b) in toolbars" :key="b" class="toolbar" :class="{ last: b === 2 }">
      <template v-for="(t, i) in bar" :key="i">
        <div v-if="t.kind === 'icon'" class="tool" :class="{ pressed: t.on, faded: t.off }">
          <svg width="24" height="24" viewBox="0 0 24 24" fill="none" v-html="icons[t.icon!]"></svg>
          <i v-if="t.icon === 'pencils' || t.icon === 'palette'" class="corner"></i>
        </div>
        <div v-else-if="t.kind === 'arrow'" class="arrow" :class="{ faint: t.off }"><i></i></div>
        <div v-else-if="t.kind === 'grip'" class="grip"><i></i></div>
        <div v-else-if="t.kind === 'sep'" class="sep"><i></i></div>
        <div v-else class="spin">
          <span>0,000</span>
          <div class="steps"><i class="inc"></i><i class="dec"></i></div>
        </div>
      </template>
    </div>

    <main class="work">
      <aside class="layers">
        <div class="dockhead">
          <svg class="docktitle" width="60" height="20"><text x="-4" y="15.500" textLength="52" lengthAdjust="spacingAndGlyphs">Warstwy</text></svg>
          <div class="dockbtns">
            <svg width="11" height="11"><rect x=".5" y=".5" width="10" height="10" rx="2" /><path d="M2.500 4.500h4v4h-4zM4.500 4.500v-2h4v4h-2" /></svg>
            <svg width="11" height="11"><rect x=".5" y=".5" width="10" height="10" rx="2" /><path class="bold" d="M3 3l5 5M8 3L3 8" /></svg>
          </div>
        </div>
        <div class="paneltools">
          <template v-for="(t, i) in panelTools" :key="i">
            <div v-if="t.kind === 'icon'" class="ptool">
              <svg width="18" height="18" viewBox="0 0 18 18" fill="none" v-html="icons[t.icon!]"></svg>
            </div>
            <div v-else class="arrow"><i></i></div>
          </template>
        </div>
        <div class="tree">
          <div v-for="l in layers" :key="l.name" class="row" :class="{ selected: l.selected }">
            <span class="twist"><i v-if="l.kind === 'group'"></i></span>
            <span class="check">
              <svg v-if="l.checked" width="12" height="12" viewBox="0 0 12 12"><path d="M2.300 5l2.700 4.300L9.500 1.800" /></svg>
            </span>
            <span class="symbol">
              <i v-if="l.kind === 'fill'" class="sw" :style="{ background: l.color }"></i>
              <i v-else-if="l.kind === 'line'" class="ln" :style="{ background: l.color }"></i>
              <i v-else-if="l.kind === 'dot'" class="dot" :style="{ background: l.color }"></i>
              <svg v-else class="poly" width="16" height="12" viewBox="0 0 16 12"><path d="M.8 3Q1 .5 4 .8q2 .2 4 1.700 2 .5 4-1 3-1.200 3.500.5 0 2.500-1 4 1.500 2 .8 4-1.300 1.500-3.800.3-3-1.500-5.500-.3-3 2-5 .8Q-.3 9.500 1.200 7 .3 5 .8 3z" fill="#dcdcdc" stroke="#8c8c8c" /></svg>
            </span>
            <svg class="label" :class="{ active: l.checked, under: l.selected }" width="200" height="22">
              <text x="0" y="16.500" :textLength="l.w" lengthAdjust="spacingAndGlyphs">{{ l.name }}</text>
              <path v-if="l.selected" d="M0 18.500h170.500" />
            </svg>
            <span v-if="l.mark" class="mark">
              <svg v-if="l.mark === 'crs'" width="15" height="15" viewBox="0 0 15 15">
                <circle cx="7.500" cy="7.500" r="5.300" fill="#e8e8e8" stroke="#bbb" /><path d="M1 7.500h13M7.500 1v13" stroke="#ccc" />
                <path d="M4.500 5Q4.600 2 7.600 2q3.100 0 3.100 2.500 0 1.300-1.700 2.300-1.300.8-1.300 2.200M7.700 10.700v2.500" fill="none" stroke="#666" stroke-width="2.300" />
              </svg>
              <svg v-else-if="l.mark === 'warn'" width="15" height="15" viewBox="0 0 15 15"><path d="M7.500 1.700l6 11.300h-12z" fill="#fff" stroke="#b85450" stroke-width="1.200" /><path d="M7.500 5.500v4M7.500 10.500v1.500" stroke="#b03030" stroke-width="1.500" /></svg>
              <svg v-else width="15" height="15" viewBox="0 0 15 15"><path d="M4.500 2v11M7.500 2v11M10.500 2v11" stroke="#777" /><rect x="2" y="4" width="11" height="7" rx="1" fill="#f8f8f8" stroke="#777" stroke-width="1.300" /></svg>
            </span>
            <span class="edge"></span>
          </div>
        </div>
      </aside>

      <div class="split"><i></i></div>

      <svg class="map" viewBox="27 6 3546 2481" preserveAspectRatio="none">
        <rect x="27" y="6" width="3546" height="2481" fill="#987db7" />
        <polygon :points="sea" fill="#fff" />
        <polygon :points="region" fill="#ff0" />
        <g class="borders">
          <polyline :points="northCoast" />
          <polyline :points="southCoast" />
          <polygon :points="region" />
          <polyline class="thick" points="1198,590 1320,593 1440,599 1560,603 1800,612 2100,624 2722,648 2682,1812 2100,1791 1560,1770 1160,1752 800,1735 650,1727 562,1724" />
          <polyline class="thick" points="788,6 753,721" />
          <polyline points="753,721 735,727 708,740 690,743 670,751 580,763 495,764" />
          <polyline points="700,745 660,752 560,766 495,766" />
        </g>
        <circle v-for="(p, i) in buildings" :key="i" :cx="p[0]" :cy="p[1]" r="11" fill="#ff9e17" stroke="#5d4020" stroke-width="3" />
      </svg>

      <div class="split right"><i></i></div>

      <section class="results">
        <div class="rhead">
          <svg class="rtitle" width="130" height="19"><text x="0" y="15" textLength="115.500" lengthAdjust="spacingAndGlyphs">Podgląd wyników</text></svg>
          <svg class="cutbtn" width="4" height="11"><rect x=".5" y=".5" width="10" height="10" rx="2" /><path d="M2.500 4.500h4v4h-4z" /></svg>
        </div>
        <div class="pane upper"></div>
        <div class="hsplit"><i></i></div>
        <div class="pane lower"></div>
      </section>
    </main>

    <footer class="status">
      <span class="field locator"></span>
      <span class="field coord"></span>
      <span class="tick"></span>
      <span class="field scale"><i></i></span>
      <span class="field magnifier"><i></i></span>
      <span class="field rotation"><i></i></span>
    </footer>
  </div>
</template>

<style>
body { margin: 0; overflow: hidden; background: #efefef; }
</style>

<style scoped>
.window {
  width: 1886px;
  height: 1007px;
  overflow: hidden;
  display: flex;
  flex-direction: column;
  background: #efefef;
  font-family: "Open Sans", "Noto Sans", sans-serif;
  font-size: 15px;
}
svg { display: block; flex: none; overflow: visible; }
.titlebar { height: 29px; display: flex; background: #fff; flex: none; }
.logo { margin-top: 2px; }
.caption { margin-left: 4px; }
.caption text { fill: #999; font-size: 15px; }
.winbuttons { margin: 8px 3px 0 auto; display: flex; gap: 46.5px; }
.winbuttons svg { fill: none; stroke: #8c8c8c; }
.menubar { height: 24px; display: flex; flex: none; border-bottom: 1px solid #d3d3d3; margin-left: -1px; }
.menu text { fill: #999; }
.key { text-decoration: underline; text-underline-offset: 2px; }
.toolbar {
  height: 38px;
  flex: none;
  display: flex;
  align-items: center;
  padding-left: 2px;
  border-bottom: 1px solid #b4b4b4;
  background: linear-gradient(#fafafa, #eeeeee);
}
.toolbar.last { height: 37px; }
.toolbar:not(.last) .tool svg { margin-right: 2px; }
.tool { width: 33px; height: 32px; flex: none; display: flex; align-items: center; justify-content: center; position: relative; box-sizing: border-box; }
.tool.pressed { background: #dadada; border: 1px solid #b5b5b5; border-radius: 3px; width: 32px; margin-right: 1px; height: 31px; }
.tool.faded svg { opacity: 0.42; }
.corner { position: absolute; right: 3px; bottom: 2px; border: 3px solid transparent; border-top: 3px solid #777; border-bottom: 0; }
.arrow { width: 12px; flex: none; display: flex; justify-content: center; }
.arrow i { border: 4px solid transparent; border-top: 4px solid #5c5c5c; border-bottom: 0; margin-right: 2px; }
.arrow.faint i { border-top-color: #a2a2a2; }
.grip { width: 20px; margin-right: -4px; flex: none; display: flex; justify-content: center; }
.grip i { width: 5px; height: 17px; background: radial-gradient(circle at 1px 1px, #b5b5b5 0.8px, transparent 1px) 0 0 / 3px 3px; }
.sep { width: 7px; flex: none; display: flex; justify-content: center; }
.sep i { width: 1px; height: 19px; background: #d0d0d0; }
.spin { width: 85px; height: 23px; flex: none; box-sizing: border-box; border: 1px solid #a6a6a6; border-radius: 3px; display: flex; align-items: center; background: #f0f0f0; color: #7f8c98; font-size: 15px; }
.spin span { width: 69px; padding-left: 4px; box-sizing: border-box; letter-spacing: -0.5px; }
.steps { width: 14px; height: 21px; border-left: 1px solid #a6a6a6; background: #f8f8f8; display: flex; flex-direction: column; align-items: center; justify-content: center; gap: 5px; }
.inc { border: 4px solid transparent; border-bottom: 4px solid #888; border-top: 0; }
.dec { border: 4px solid transparent; border-top: 4px solid #888; border-bottom: 0; }

.work { height: 829px; flex: none; display: flex; margin-top: 1px; }
.layers { width: 262px; flex: none; display: flex; flex-direction: column; }
.dockhead { height: 20px; display: flex; justify-content: space-between; }
.docktitle text, .rhead text { fill: #111; }
.dockbtns { display: flex; gap: 3px; margin: 4px 2px 0 0; }
.dockbtns svg, .cutbtn { fill: none; stroke: #666; }
.bold { stroke-width: 2; }
.paneltools { height: 30px; display: flex; align-items: center; margin-left: -7px; }
.ptool { width: 25px; display: flex; justify-content: center; padding-bottom: 2px; }
.tree { height: 777px; background: #fff; border: 1px solid #b8b8b8; border-left: 0; }
.row { height: 22px; display: flex; align-items: center; }
.row.selected { background: #efefef; }
.twist { width: 13px; flex: none; }
.twist i { display: block; width: 0; border: 3px solid transparent; border-left: 3px solid #555; border-right: 0; margin-left: -1px; }
.check { width: 14px; height: 14px; box-sizing: border-box; border: 1px solid #b4b4b4; background: #fff; flex: none; }
.check svg { fill: none; stroke: #000; stroke-width: 1.700; }
.symbol { width: 16px; height: 16px; margin: 0 6px; flex: none; display: flex; align-items: center; justify-content: center; }
.sw { width: 16px; height: 16px; box-sizing: border-box; border: 1px solid rgba(35, 35, 35, 0.6); }
.ln { width: 16px; height: 1px; }
.dot { width: 7px; height: 7px; box-sizing: border-box; border: 1px solid rgba(35, 35, 35, 0.55); border-radius: 50%; margin-right: 1px; }
.poly { margin-bottom: 2px; }
.label { width: 181px; }
.label text { font-weight: 700; font-style: italic; fill: #7d7d7d; }
.label.active text { fill: #000; font-style: normal; }
.label path { stroke: #000; }
.mark { width: 19px; height: 19px; box-sizing: border-box; border: 1px solid #dedede; border-radius: 3px; background: #f5f5f5; display: flex; align-items: center; justify-content: center; flex: none; }
.mark svg { margin-right: 1px; }
.edge { width: 3px; height: 18px; background: #e3e3e3; margin-left: auto; margin-right: 1px; flex: none; }

.split { width: 6px; display: flex; align-items: flex-start; justify-content: center; }
.split i { width: 1px; height: 17px; margin-top: 408px; margin-left: 1px; background: repeating-linear-gradient(#aaa 0 1px, transparent 1px 3px); }
.map { width: 1182px; height: 827px; border: 1px solid #b3b3b3; overflow: hidden; }
.borders { fill: none; stroke: #232323; stroke-width: 2.600; stroke-linejoin: round; }
.thick { stroke-width: 3.400; }
.results { width: 428px; display: flex; flex-direction: column; }
.rhead { height: 19px; display: flex; justify-content: space-between; padding-left: 4px; }
.rtitle { position: relative; z-index: 1; }
.cutbtn { margin-top: 4px; overflow: hidden; }
.pane { background: #fff; border: 1px solid #b8b8b8; border-right: 0; box-sizing: border-box; }
.upper { height: 403px; }
.hsplit { height: 4px; display: flex; justify-content: center; align-items: center; }
.hsplit i { width: 16px; height: 1px; margin-left: 25px; background: repeating-linear-gradient(90deg, #aaa 0 1px, transparent 1px 3px); }
.lower { height: 403px; }

.status { display: flex; padding-top: 3px; height: 4px; overflow: hidden; }
.field { height: 24px; box-sizing: border-box; border: 1px solid #a9a9a9; border-radius: 3px; background: #fff; flex: none; display: flex; justify-content: flex-end; }
.field i { width: 14px; border-left: 1px solid #a9a9a9; }
.locator { width: 196px; margin-left: -3px; }
.coord { width: 116px; margin-left: 943px; }
.tick { width: 4px; height: 2px; margin: 2px 53px 0 8px; background: #444; flex: none; }
.scale { width: 98px; margin-left: 2px; }
.scale i { width: 18px; }
.magnifier { width: 88px; margin: 1px 0 0 112px; }
.rotation { width: 84px; margin: 1px 0 0 50px; }
</style>
